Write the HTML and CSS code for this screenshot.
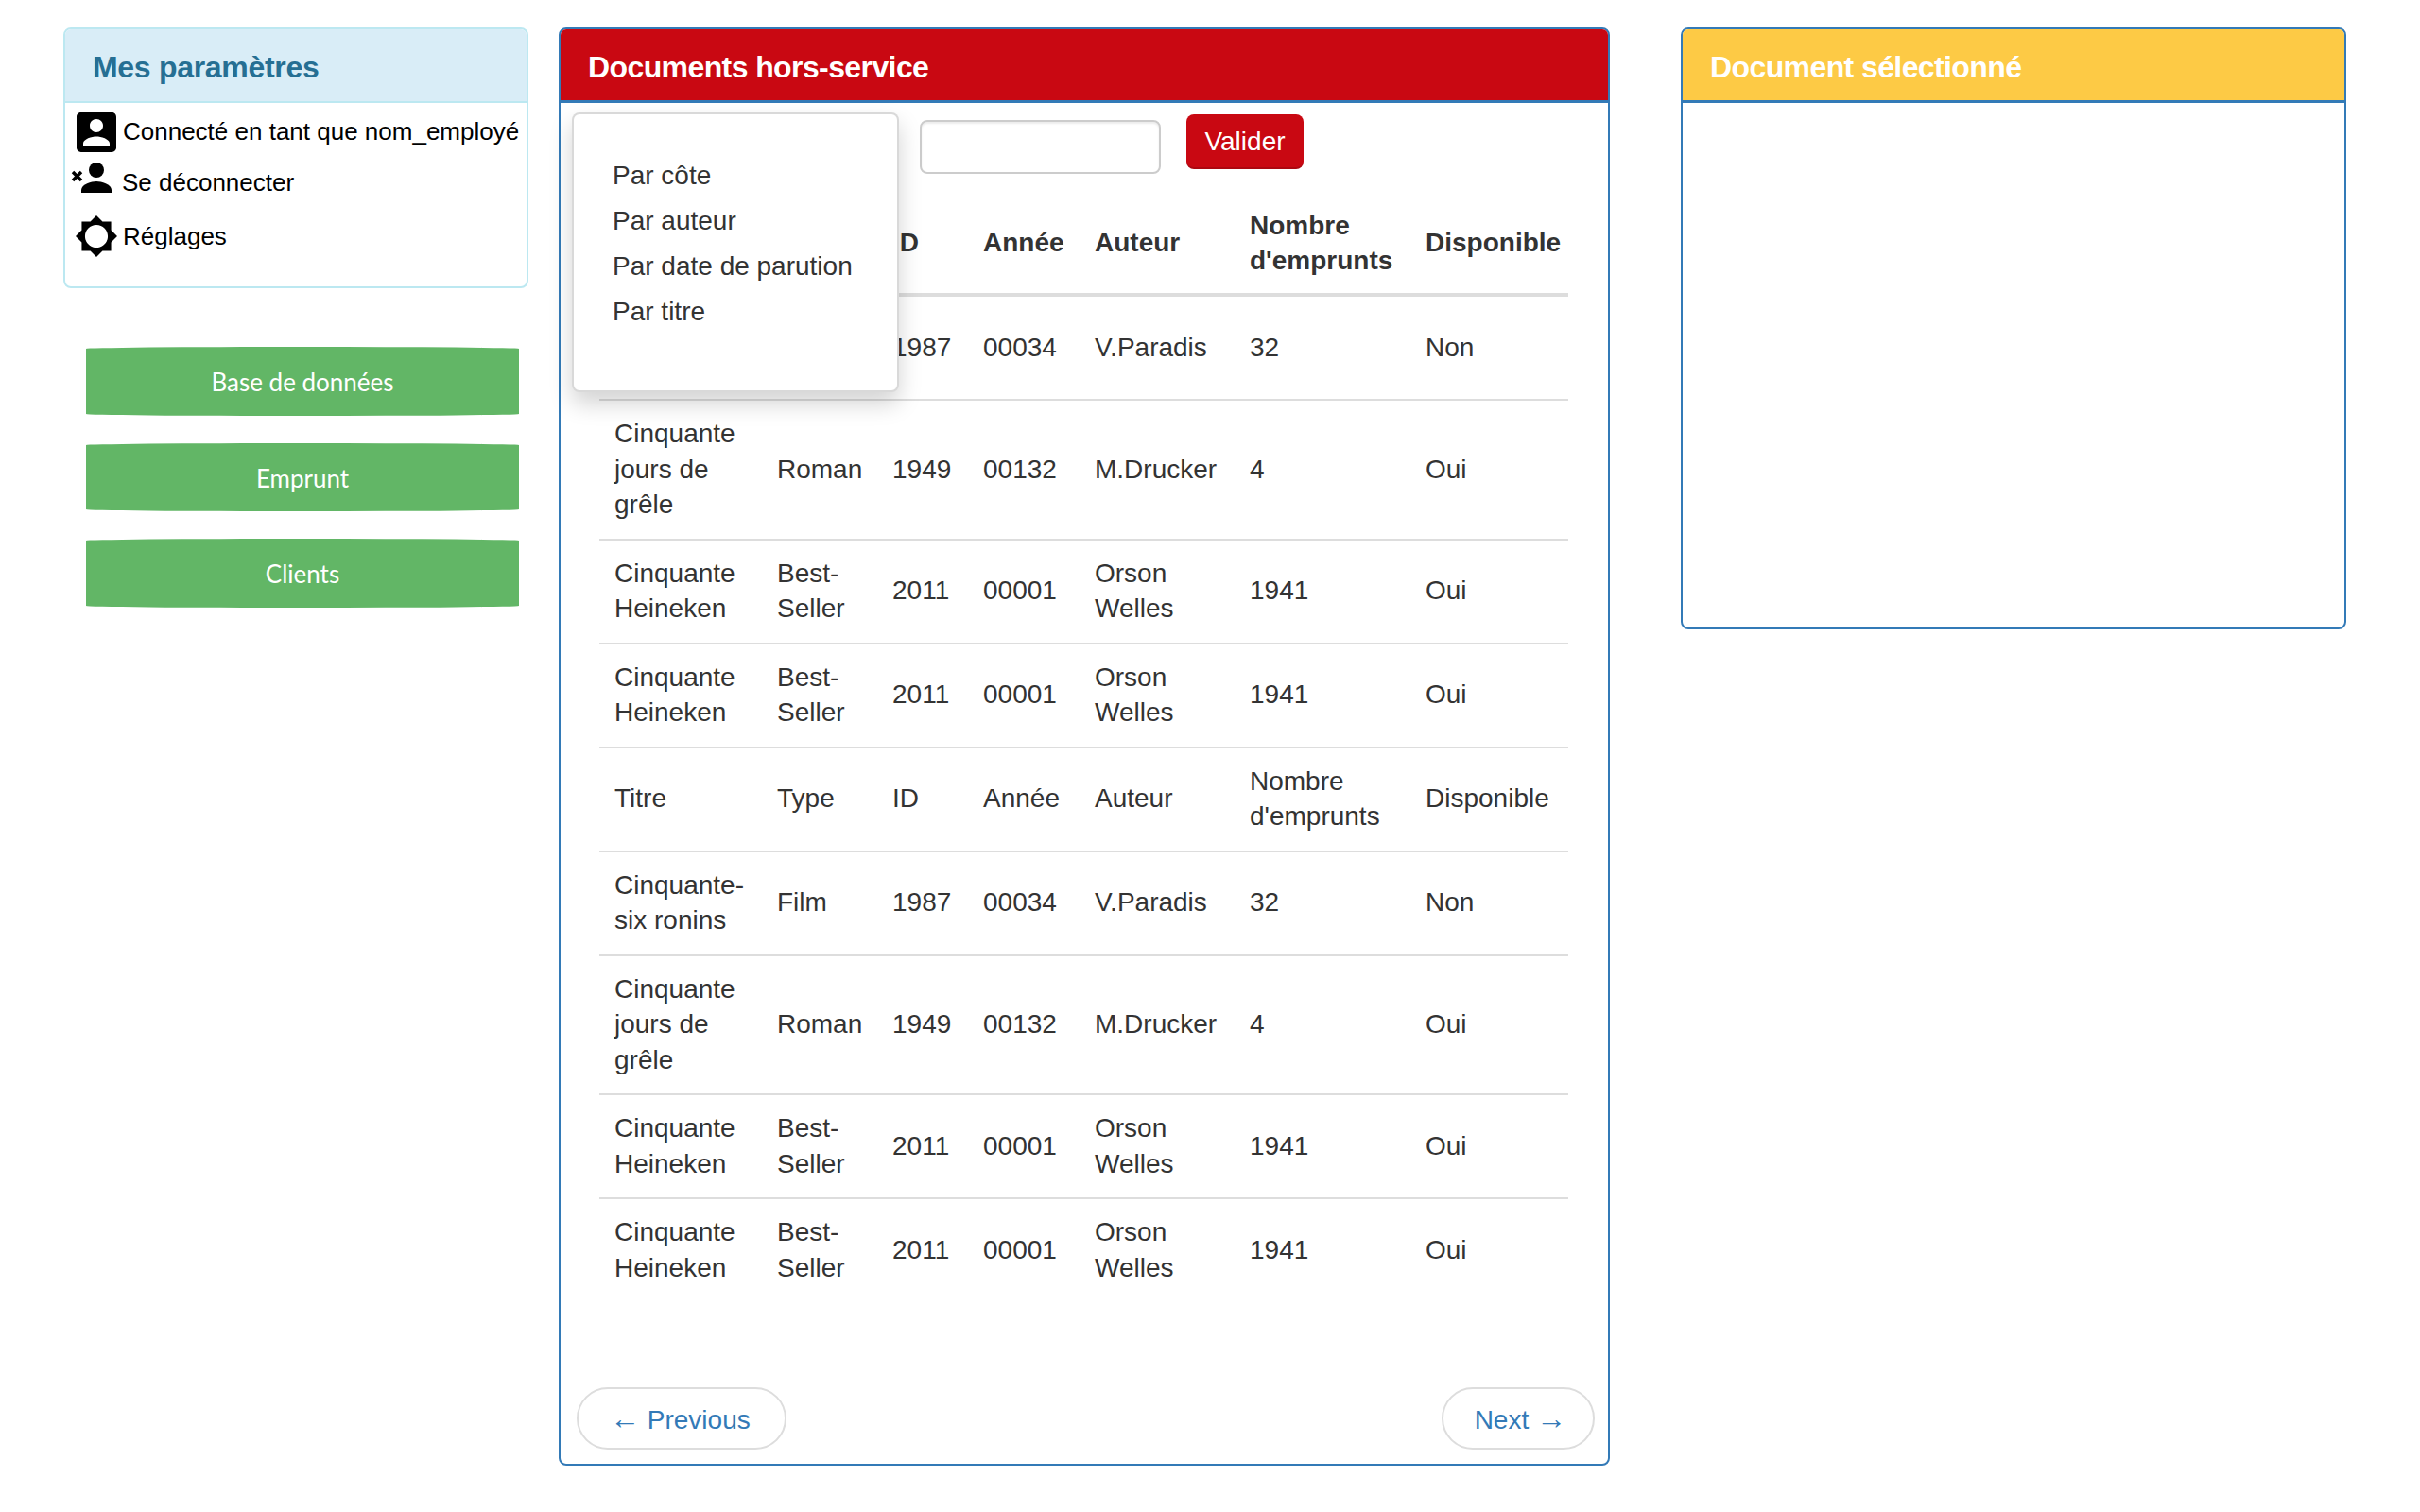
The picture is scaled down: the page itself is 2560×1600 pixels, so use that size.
FILE: index.html
```html
<!DOCTYPE html>
<html lang="fr">
<head>
  <meta charset="UTF-8">
  <title>Documents hors-service</title>
  <link rel="stylesheet" href="styles.css">
</head>
<body>
  <aside class="sidebar">
    <section class="panel panel-info">
      <div class="panel-heading">Mes paramètres</div>
      <div class="params">
        <div class="param param-user">
          <svg class="icon" width="42" height="42" viewBox="3 3 18 18"><path d="M3 5v14c0 1.1.89 2 2 2h14c1.1 0 2-.9 2-2V5c0-1.1-.9-2-2-2H5c-1.11 0-2 .9-2 2zm12 4c0 1.66-1.34 3-3 3s-3-1.34-3-3 1.34-3 3-3 3 1.34 3 3zm-9 8c0-2 4-3.1 6-3.1s6 1.1 6 3.1v1H6v-1z"/></svg>
          <span>Connecté en tant que nom_employé</span>
        </div>
        <div class="param param-logout">
          <svg class="icon" width="43" height="32" viewBox="0 0 43 32"><circle cx="27" cy="8" r="8"/><path d="M11 32v-3c0-6 11-9 16-9s16 3 16 9v3z"/><path d="M2 10l9 9m0-9l-9 9" fill="none" stroke="#000" stroke-width="3.500"/></svg>
          <span>Se déconnecter</span>
        </div>
        <div class="param param-settings">
          <svg class="icon" width="44" height="44" viewBox="0.69 0.69 22.62 22.62"><path fill-rule="evenodd" d="M20 15.31L23.31 12 20 8.69V4h-4.69L12 .69 8.69 4H4v4.69L.69 12 4 15.31V20h4.69L12 23.31 15.31 20H20v-4.69zM12 18.200c-3.420 0-6.200-2.780-6.200-6.200s2.780-6.200 6.200-6.200 6.200 2.780 6.200 6.200-2.780 6.200-6.200 6.200z"/></svg>
          <span>Réglages</span>
        </div>
      </div>
    </section>

    <nav class="menu">
      <a class="menu-btn" href="#">Base de données</a>
      <a class="menu-btn" href="#">Emprunt</a>
      <a class="menu-btn" href="#">Clients</a>
    </nav>
  </aside>

  <main class="panel panel-docs">
    <div class="panel-heading heading-red">Documents hors-service</div>
    <div class="docs-body">
      <ul class="dropdown">
        <li>Par côte</li>
        <li>Par auteur</li>
        <li>Par date de parution</li>
        <li>Par titre</li>
      </ul>

      <form class="search">
        <input class="search-input" type="text">
        <button class="btn-valider" type="button">Valider</button>
      </form>

      <table class="docs">
        <colgroup>
          <col class="c-titre"><col class="c-type"><col class="c-id"><col class="c-annee">
          <col class="c-auteur"><col class="c-nombre"><col class="c-dispo">
        </colgroup>
        <thead>
          <tr><th>Titre</th><th>Type</th><th>ID</th><th>Année</th><th>Auteur</th><th>Nombre d'emprunts</th><th>Disponible</th></tr>
        </thead>
        <tbody>
          <tr><td>Cinquante-six ronins</td><td>Film</td><td>1987</td><td>00034</td><td>V.Paradis</td><td>32</td><td>Non</td></tr>
          <tr><td>Cinquante jours de grêle</td><td>Roman</td><td>1949</td><td>00132</td><td>M.Drucker</td><td>4</td><td>Oui</td></tr>
          <tr><td>Cinquante Heineken</td><td>Best-Seller</td><td>2011</td><td>00001</td><td>Orson Welles</td><td>1941</td><td>Oui</td></tr>
          <tr><td>Cinquante Heineken</td><td>Best-Seller</td><td>2011</td><td>00001</td><td>Orson Welles</td><td>1941</td><td>Oui</td></tr>
          <tr><td>Titre</td><td>Type</td><td>ID</td><td>Année</td><td>Auteur</td><td>Nombre d'emprunts</td><td>Disponible</td></tr>
          <tr><td>Cinquante-six ronins</td><td>Film</td><td>1987</td><td>00034</td><td>V.Paradis</td><td>32</td><td>Non</td></tr>
          <tr><td>Cinquante jours de grêle</td><td>Roman</td><td>1949</td><td>00132</td><td>M.Drucker</td><td>4</td><td>Oui</td></tr>
          <tr><td>Cinquante Heineken</td><td>Best-Seller</td><td>2011</td><td>00001</td><td>Orson Welles</td><td>1941</td><td>Oui</td></tr>
          <tr><td>Cinquante Heineken</td><td>Best-Seller</td><td>2011</td><td>00001</td><td>Orson Welles</td><td>1941</td><td>Oui</td></tr>
        </tbody>
      </table>

      <div class="pager">
        <a class="pager-btn pager-prev" href="#"><span class="arrow">←</span> Previous</a>
        <a class="pager-btn pager-next" href="#">Next <span class="arrow">→</span></a>
      </div>
    </div>
  </main>

  <section class="panel panel-selected">
    <div class="panel-heading heading-yellow">Document sélectionné</div>
  </section>
</body>
</html>
```

FILE: styles.css
```css
* {
  box-sizing: border-box;
}

body {
  margin: 0;
  padding: 29px 0 0 67px;
  display: flex;
  align-items: flex-start;
  background: #fff;
  color: #333;
  font-family: "Liberation Sans", Arial, sans-serif;
  font-size: 28px;
  line-height: 37.5px;
}

.panel {
  background: #fff;
  border: 2px solid #337ab7;
  border-radius: 8px;
}

.panel-heading {
  height: 78px;
  padding-top: 20px;
  padding-left: 29px;
  font-size: 32px;
  line-height: 40px;
  font-weight: bold;
  letter-spacing: -0.6px;
  color: #fff;
  border-bottom: 3px solid #337ab7;
  border-radius: 6px 6px 0 0;
}

/* colonne de gauche */
.sidebar {
  width: 492px;
  flex: none;
}

.panel-info {
  height: 276px;
  border-color: #bce8f1;
}

.panel-info .panel-heading {
  color: #266f93;
  background: #d9edf7;
  border-bottom: 2px solid #bce8f1;
  letter-spacing: -0.3px;
}

.params {
  color: #000;
  font-size: 26px;
}

.param {
  display: flex;
  align-items: center;
}

.param-user {
  margin-top: 10px;
  padding-left: 12px;
  gap: 7px;
}

.param-logout {
  align-items: flex-start;
  margin-top: 11px;
  padding-left: 6px;
  gap: 11px;
}

.param-logout span {
  margin-top: 3px;
}

.param-settings {
  margin-top: 15px;
  padding-left: 11px;
  gap: 6px;
}

.param-settings span {
  margin-top: 2px;
}

.icon {
  flex: none;
  display: block;
}

.menu {
  margin: 62px 10px 0 24px;
  display: flex;
  flex-direction: column;
  gap: 29px;
}

.menu-btn {
  display: block;
  height: 72.5px;
  padding-top: 2px;
  background: #62b666;
  border-radius: 50% / 2px;
  color: #fff;
  text-align: center;
  text-decoration: none;
  font-family: "Comic Sans MS", "Lato", sans-serif;
  font-size: 26px;
  line-height: 70px;
}

/* panneau central */
.panel-docs {
  width: 1112px;
  height: 1522px;
  margin-left: 32px;
  flex: none;
}

.heading-red {
  background: #c90812;
}

.docs-body {
  position: relative;
  height: 1440px;
  padding: 12px 14px 15px 17px;
  display: flex;
  flex-direction: column;
}

.dropdown {
  position: absolute;
  z-index: 2;
  top: 10px;
  left: 12px;
  width: 346px;
  height: 296px;
  margin: 0;
  padding: 41px 0 0 41px;
  list-style: none;
  background: #fff;
  border: 2px solid rgba(0, 0, 0, 0.15);
  border-radius: 8px;
  box-shadow: 0 12px 24px rgba(0, 0, 0, 0.175);
}

.dropdown li {
  height: 48px;
  line-height: 48px;
}

.search {
  display: flex;
  align-items: flex-start;
  height: 81px;
  margin: 0 0 0 363px;
}

.search-input {
  width: 255px;
  height: 57px;
  margin-top: 6px;
  border: 2px solid #ccc;
  border-radius: 8px;
  box-shadow: inset 0 2px 2px rgba(0, 0, 0, 0.075);
}

.btn-valider {
  width: 124px;
  height: 58px;
  margin-left: 27px;
  padding: 2px 0 0;
  background: #c90812;
  border: 0;
  border-bottom: 2px solid #ac0710;
  border-radius: 8px;
  color: #fff;
  font: inherit;
}

.docs {
  width: 1025px;
  margin-left: 24px;
  table-layout: fixed;
  border-collapse: collapse;
}

.c-titre { width: 172px; }
.c-type { width: 122px; }
.c-id { width: 96px; }
.c-annee { width: 118px; }
.c-auteur { width: 164px; }
.c-nombre { width: 186px; }
.c-dispo { width: 167px; }

.docs th,
.docs td {
  padding: 16px 16px 17px;
  text-align: left;
  vertical-align: middle;
}

.docs th {
  padding-top: 17.500px;
  padding-bottom: 15.500px;
  border-bottom: 4px solid #ddd;
}

.docs td {
  border-bottom: 2px solid #ddd;
}

.docs tr:last-child td {
  border-bottom: 0;
}

.pager {
  margin-top: auto;
  display: flex;
  justify-content: space-between;
}

.pager-btn {
  height: 66px;
  border: 2px solid #ddd;
  border-radius: 33px;
  color: #337ab7;
  text-decoration: none;
  line-height: 62px;
}

.pager-prev {
  padding: 0 36px 0 33px;
}

.pager-next {
  padding: 0 28px 0 33px;
}

.arrow {
  font-size: 32px;
}

/* panneau de droite */
.panel-selected {
  width: 704px;
  height: 637px;
  margin-left: 75px;
  flex: none;
}

.heading-yellow {
  background: #fdca45;
}
```
